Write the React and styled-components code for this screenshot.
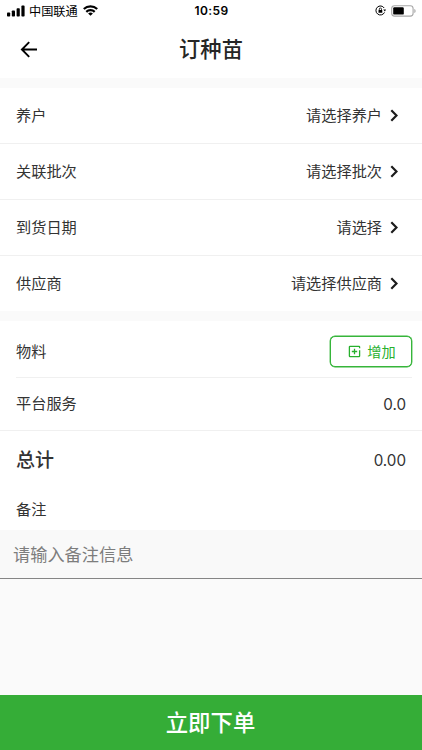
import React, { useState } from 'react'
import styled, { createGlobalStyle } from 'styled-components';

const GlobalStyle = createGlobalStyle`
    * {
        box-sizing: border-box;
    }

    body {
        margin: 0;
        background-color: #fafafa;
        color: #333;
        font-family: Roboto, 'Noto Sans CJK SC', sans-serif;
    }
`;

const Wrapper = styled.div`
    display: flex;
    flex-direction: column;
    height: 100vh;
    overflow: hidden;
    background-color: #fafafa;
`;

const StatusBar = styled.div`
    display: grid;
    grid-template-columns: 1fr auto 1fr;
    align-items: center;
    height: 22px;
    padding: 0 6px 0 7px;
    background-color: white;
    color: black;
`;

const StatusLeft = styled.div`
    display: flex;
    align-items: center;

    & > span {
        margin: 0 5px 0 4px;
        padding-top: 2px;
        font-size: 12.2px;
        line-height: 20px;
    }

    & > svg {
        margin-top: -1px;
    }
`;

const Clock = styled.div`
    font-family: Inter, sans-serif;
    font-size: 12px;
    font-weight: 600;
    letter-spacing: .4px;
    line-height: 22px;
`;

const StatusRight = styled.div`
    display: flex;
    align-items: center;
    justify-content: flex-end;
    gap: 5px;
    margin-top: -1px;
`;

const Header = styled.div`
    display: grid;
    grid-template-columns: 56px 1fr 56px;
    align-items: center;
    height: 56px;
    background-color: white;
`;

const BackButton = styled.button`
    display: flex;
    padding: 0 0 2px 20px;
    border: none;
    background: none;
    color: black;
`;

const Title = styled.h1`
    margin: 0;
    font-size: 21.3px;
    font-weight: 500;
    line-height: 56px;
    text-align: center;
    color: #262626;
`;

const Section = styled.div`
    margin-top: 10px;
    background-color: white;
`;

const Row = styled.div`
    display: flex;
    align-items: center;
    justify-content: space-between;
    height: ${(props) => props.$height || 56}px;
    padding: 0 16px;
    border-bottom: ${(props) => (props.$line ? '1px solid #f0f0f0' : 'none')};
`;

const InsetRow = styled(Row)`
    margin: 0 10px 0 16px;
    padding: 5px 0 0;
`;

const Label = styled.span`
    font-size: 15.2px;
    line-height: 24px;
`;

const TotalLabel = styled.span`
    padding-top: 2px;
    font-size: 19px;
    font-weight: 500;
    line-height: 28px;
`;

const Value = styled.span`
    display: flex;
    align-items: center;
    gap: 8px;
    margin-right: 8px;
    font-size: 15.2px;
    line-height: 24px;
`;

const Amount = styled.span`
    font-family: Inter, sans-serif;
    font-size: 15.2px;
`;

const AddButton = styled.button`
    display: flex;
    align-items: center;
    justify-content: center;
    gap: 6px;
    width: 82px;
    height: 31px;
    padding: 0 0 0 2px;
    border: 1px solid #36b53a;
    border-radius: 5px;
    background-color: white;
    box-shadow: 0 0 0 .4px #36b53a;
    color: #27b02d;
    font-family: inherit;
    font-size: 14.2px;
    line-height: 20px;
`;

const RemarkInput = styled.input`
    display: block;
    width: 100%;
    height: 49px;
    padding: 1px 13px 0;
    border: none;
    border-bottom: 1px solid #858585;
    border-radius: 0;
    outline: none;
    background-color: #f9f9f9;
    font-family: inherit;
    font-size: 17.2px;

    &::placeholder {
        color: #7d7d7d;
        opacity: 1;
    }
`;

const SubmitButton = styled.button`
    height: 55px;
    margin-top: auto;
    padding: 1px 1px 0 0;
    border: none;
    background-color: #35ad37;
    color: white;
    font-family: inherit;
    font-size: 22.4px;
    font-weight: 500;
    line-height: 54px;
`;

const Signal = () => (
  <svg width="18" height="12" viewBox="0 0 18 12" fill="currentColor">
    <rect x="0" y="7.5" width="3.2" height="4" rx=".8" />
    <rect x="4.8" y="5.5" width="3.2" height="6" rx=".8" />
    <rect x="9.6" y="3.2" width="3.2" height="8.3" rx=".8" />
    <rect x="14.4" y=".6" width="3.2" height="10.9" rx=".8" />
  </svg>
);

const Wifi = () => (
  <svg width="15" height="11" viewBox="0 0 15 11" fill="none" stroke="currentColor" strokeWidth="2.2">
    <path d="M.8 4a9.7 9.7 0 0 1 13.4 0" />
    <path d="M3.3 6.9a6 6 0 0 1 8.4 0" />
    <path d="M7.5 10.8 5.1 8.6a3.5 3.5 0 0 1 4.8 0z" fill="currentColor" stroke="none" />
  </svg>
);

const RotationLock = () => (
  <svg width="11" height="11" viewBox="0 0 11 11" fill="none" stroke="currentColor">
    <path d="M9.2 3A4.5 4.5 0 1 0 9.5 7.4" strokeWidth="1" />
    <path d="M8.2 4.4h2.8L9.9 6.4z" fill="currentColor" stroke="none" />
    <rect x="3.5" y="4.9" width="3.8" height="2.9" rx=".4" fill="currentColor" stroke="none" />
    <path d="M4.3 5V4.1a1.1 1.1 0 0 1 2.2 0V5" strokeWidth=".8" />
  </svg>
);

const Battery = () => (
  <svg width="25" height="12" viewBox="0 0 25 12">
    <rect x=".7" y=".7" width="21.4" height="10.4" rx="2.8" fill="none" stroke="#a8a8a8" strokeWidth="1.1" />
    <rect x="2.2" y="2.2" width="10.6" height="7.4" rx="1.2" fill="black" />
    <path d="M23.3 4v4c.9-.4 1.3-1.1 1.3-2s-.4-1.6-1.3-2z" fill="#a8a8a8" />
  </svg>
);

const BackArrow = () => (
  <svg width="18" height="17" viewBox="0 0 18 17" fill="none" stroke="currentColor" strokeWidth="1.9">
    <path d="M9.2 1.2 1.9 8.5l7.3 7.3M1.9 8.5H17" />
  </svg>
);

const Chevron = () => (
  <svg width="8" height="14" viewBox="0 0 8 14" fill="none" stroke="#1c1c1c" strokeWidth="2.2">
    <path d="M1.3 1.3 6.5 6.5l-5.2 5.2" />
  </svg>
);

const AddIcon = () => (
  <svg width="13" height="13" viewBox="0 0 13 13" fill="none" stroke="currentColor" strokeWidth="1.3">
    <path d="M11.6 3.3V2a.6.6 0 0 0-.6-.6H2a.6.6 0 0 0-.6.6v9a.6.6 0 0 0 .6.6h9a.6.6 0 0 0 .6-.6V5.3" />
    <path d="M6.5 3.8v5.4M3.8 6.5h5.4" />
  </svg>
);

const fields = [
  { label: '养户', value: '请选择养户' },
  { label: '关联批次', value: '请选择批次' },
  { label: '到货日期', value: '请选择' },
  { label: '供应商', value: '请选择供应商' },
];

const App = () => {
  const [remark, setRemark] = useState('');

  return (
    <Wrapper>
        <GlobalStyle />
        <StatusBar>
            <StatusLeft>
                <Signal />
                <span>中国联通</span>
                <Wifi />
            </StatusLeft>
            <Clock>10:59</Clock>
            <StatusRight>
                <RotationLock />
                <Battery />
            </StatusRight>
        </StatusBar>
        <Header>
            <BackButton>
                <BackArrow />
            </BackButton>
            <Title>订种苗</Title>
        </Header>
        <Section>
            {fields.map(({label, value}, index) => {
                const last = index === fields.length - 1;
                return (
                    <Row key={label} $height={last ? 55 : 56} $line={!last}>
                        <Label>{label}</Label>
                        <Value>
                            {value}
                            <Chevron />
                        </Value>
                    </Row>
                )
            })}
        </Section>
        <Section>
            <InsetRow $height={57} $line>
                <Label>物料</Label>
                <AddButton>
                    <AddIcon />
                    增加
                </AddButton>
            </InsetRow>
            <Row $height={53} $line>
                <Label>平台服务</Label>
                <Amount>0.0</Amount>
            </Row>
            <Row $height={58}>
                <TotalLabel>总计</TotalLabel>
                <Amount>0.00</Amount>
            </Row>
            <Row $height={41}>
                <Label>备注</Label>
            </Row>
            <RemarkInput placeholder='请输入备注信息' type='text' value={remark} onChange={(e) => setRemark(e.target.value)}/>
        </Section>
        <SubmitButton>立即下单</SubmitButton>
    </Wrapper>
  )
}

export default App
